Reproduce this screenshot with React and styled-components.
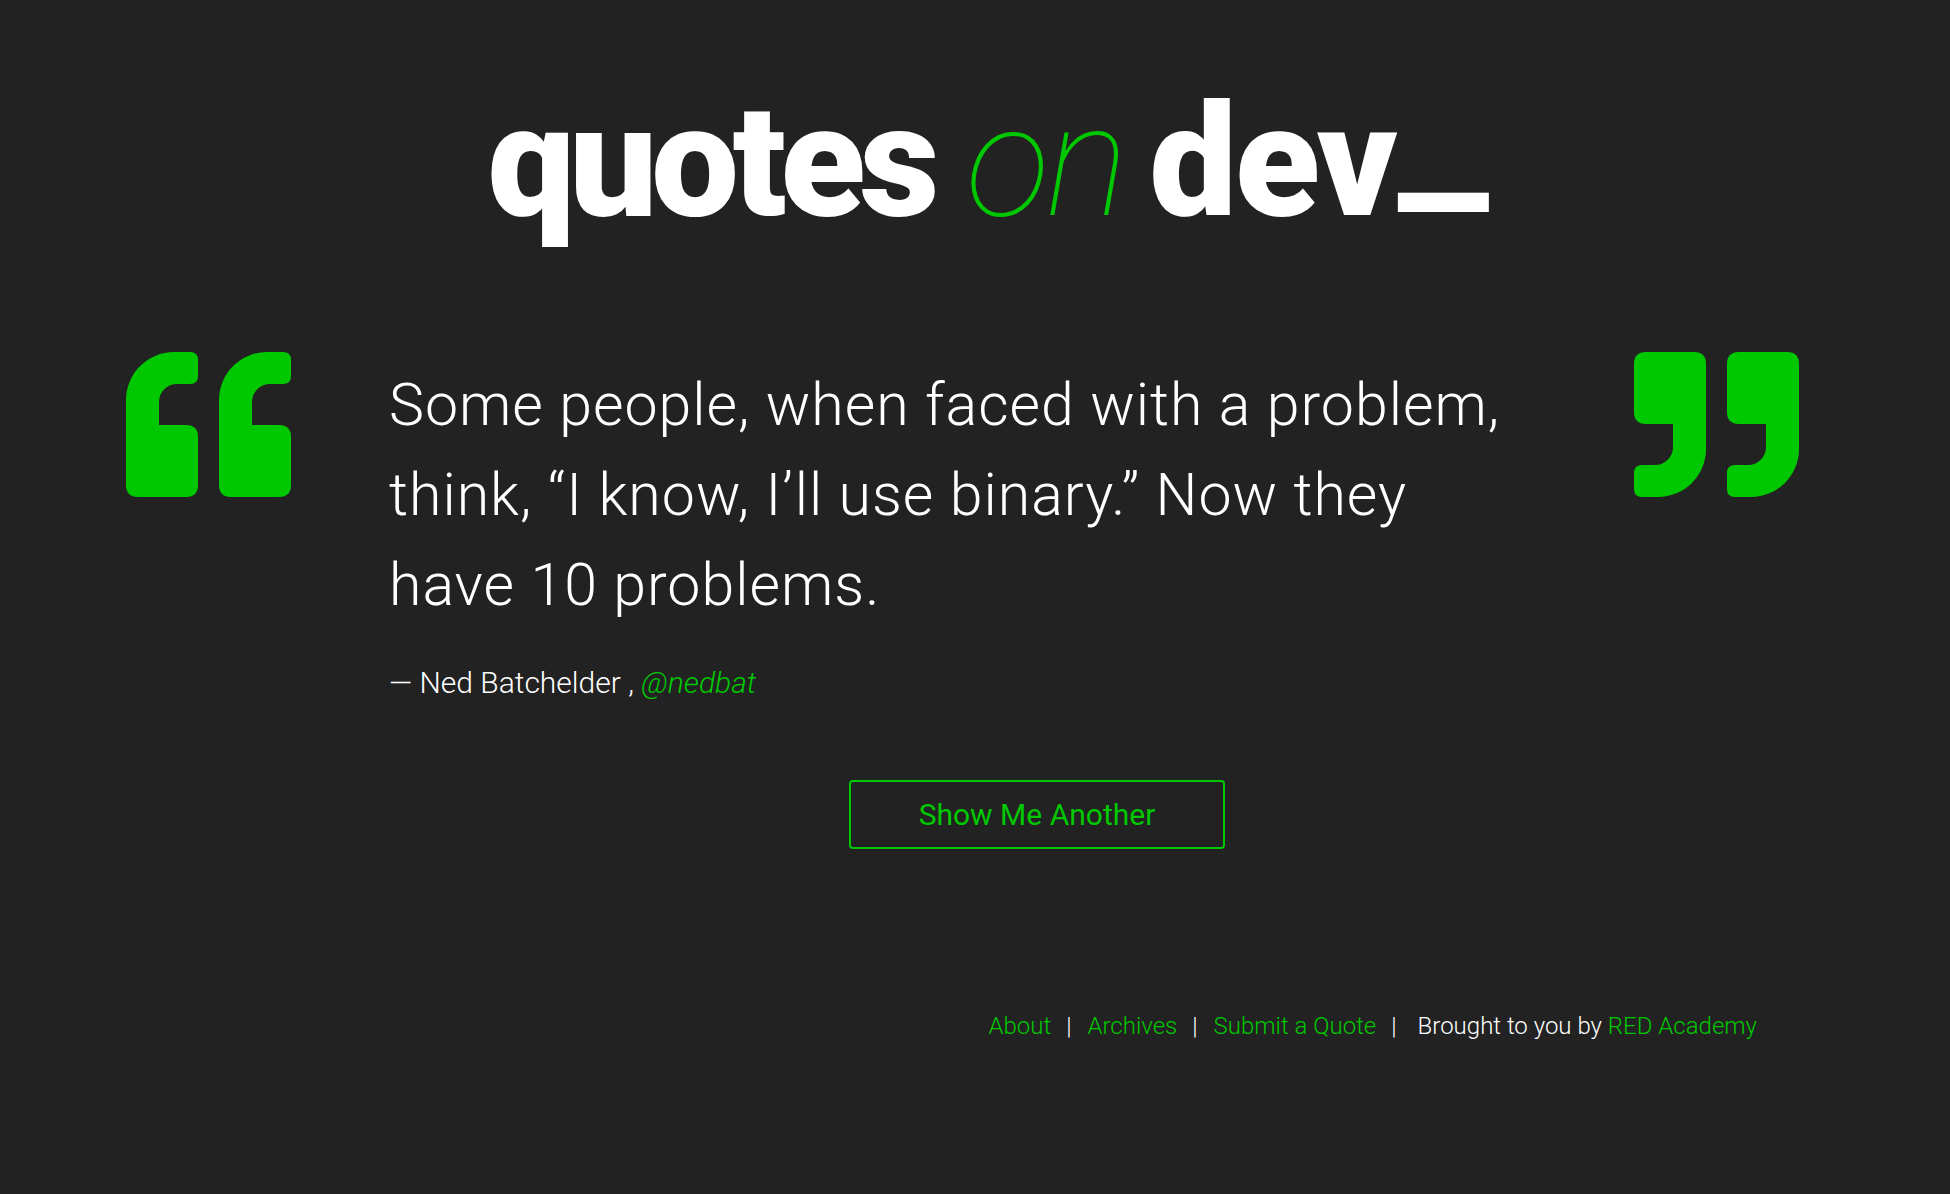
import React from "react";
import styled, { createGlobalStyle } from "styled-components";

const GREEN = "#00c800";

const Global = createGlobalStyle`
  html, body { margin: 0; padding: 0; background: #222222; }
  body { font-family: Roboto, "Open Sans", sans-serif; color: #ffffff; }
  * { box-sizing: border-box; }
`;

const Page = styled.div`
  width: 1950px;
  min-height: 1194px;
  background: #222222;
  display: flex;
  flex-direction: column;
`;

const Header = styled.header`
  display: flex;
  justify-content: center;
  padding: 84px 2px 0 0;
`;

const Title = styled.h1`
  margin: 0;
  font-family: Roboto, sans-serif;
  font-weight: 900;
  font-size: 156px;
  line-height: 1;
  letter-spacing: -6px;
  color: #ffffff;
  white-space: nowrap;
`;

const On = styled.em`
  font-weight: 100;
  font-style: italic;
  color: ${GREEN};
  letter-spacing: -4px;
`;

const Dev = styled.span`
  margin-left: -8px;
  letter-spacing: -2px;
`;

const Underscore = styled.span`
  display: inline-block;
  margin-left: 2px;
  transform: translateY(-22px) scaleX(1.32);
  transform-origin: left center;
`;

const QuoteRow = styled.section`
  display: grid;
  grid-template-columns: 165px 1fr 167px;
  column-gap: 98px;
  padding: 0 149px 0 126px;
  margin-top: 112px;
`;

const Mark = styled.svg`
  display: block;
  width: 165px;
  height: 145px;
  fill: ${GREEN};
`;

const QuoteBody = styled.div`
  padding-top: 8px;
`;

const QuoteText = styled.p`
  margin: 0;
  max-width: 1130px;
  font-family: Roboto, sans-serif;
  font-weight: 300;
  font-size: 59px;
  line-height: 90px;
  letter-spacing: 1px;
  color: #ffffff;
`;

const Author = styled.p`
  margin: 35px 0 0;
  font-family: Roboto, sans-serif;
  font-weight: 300;
  font-size: 30px;
  line-height: 36px;
  color: #ffffff;
`;

const Handle = styled.a`
  color: ${GREEN};
  font-style: italic;
  font-weight: 300;
  text-decoration: none;
`;

const ButtonRow = styled.div`
  display: flex;
  justify-content: center;
  padding-left: 124px;
  margin-top: 79px;
`;

const Button = styled.button`
  width: 376px;
  height: 69px;
  border: 2px solid ${GREEN};
  border-radius: 4px;
  background: transparent;
  color: ${GREEN};
  font-family: Roboto, sans-serif;
  font-weight: 400;
  font-size: 30px;
  cursor: pointer;
`;

const Footer = styled.footer`
  display: flex;
  justify-content: flex-end;
  align-items: baseline;
  padding-right: 193px;
  margin-top: 162px;
  font-family: Roboto, sans-serif;
  font-weight: 300;
  font-size: 24px;
  line-height: 30px;
  color: #ffffff;
`;

const FootLink = styled.a`
  color: ${GREEN};
  text-decoration: none;
`;

const Sep = styled.span`
  margin: 0 ${(p) => (p.$wide ? "21px" : "16px")} 0 15px;
  color: #ffffff;
`;

const Credit = styled.span`
  color: #ffffff;
`;

const GLYPH =
  "M48 0 H64 Q72 0 72 8 V24 Q72 32 64 32 H51 A18 18 0 0 0 33 50 V73 H60 Q72 73 72 85 V133 Q72 145 60 145 H12 Q0 145 0 133 V48 A48 48 0 0 1 48 0 Z";

const QuoteMark = ({ flip }) => (
  <Mark viewBox="0 0 165 145" aria-hidden="true">
    <g transform={flip ? "rotate(180 82.5 72.5)" : undefined}>
      <path d={GLYPH} />
      <path d={GLYPH} transform="translate(93 0)" />
    </g>
  </Mark>
);

export default function App() {
  return (
    <Page>
      <Global />
      <Header>
        <Title>
          quotes <On>on</On> <Dev>dev</Dev>
          <Underscore>_</Underscore>
        </Title>
      </Header>
      <QuoteRow>
        <QuoteMark />
        <QuoteBody>
          <QuoteText>
            Some people, when faced with a problem, think, “I know, I’ll use
            binary.” Now they have 10 problems.
          </QuoteText>
          <Author>
            — Ned Batchelder , <Handle href="#">@nedbat</Handle>
          </Author>
        </QuoteBody>
        <QuoteMark flip />
      </QuoteRow>
      <ButtonRow>
        <Button type="button">Show Me Another</Button>
      </ButtonRow>
      <Footer>
        <FootLink href="#">About</FootLink>
        <Sep>|</Sep>
        <FootLink href="#">Archives</FootLink>
        <Sep>|</Sep>
        <FootLink href="#">Submit a Quote</FootLink>
        <Sep $wide>|</Sep>
        <Credit>
          Brought to you by <FootLink href="#">RED Academy</FootLink>
        </Credit>
      </Footer>
    </Page>
  );
}
